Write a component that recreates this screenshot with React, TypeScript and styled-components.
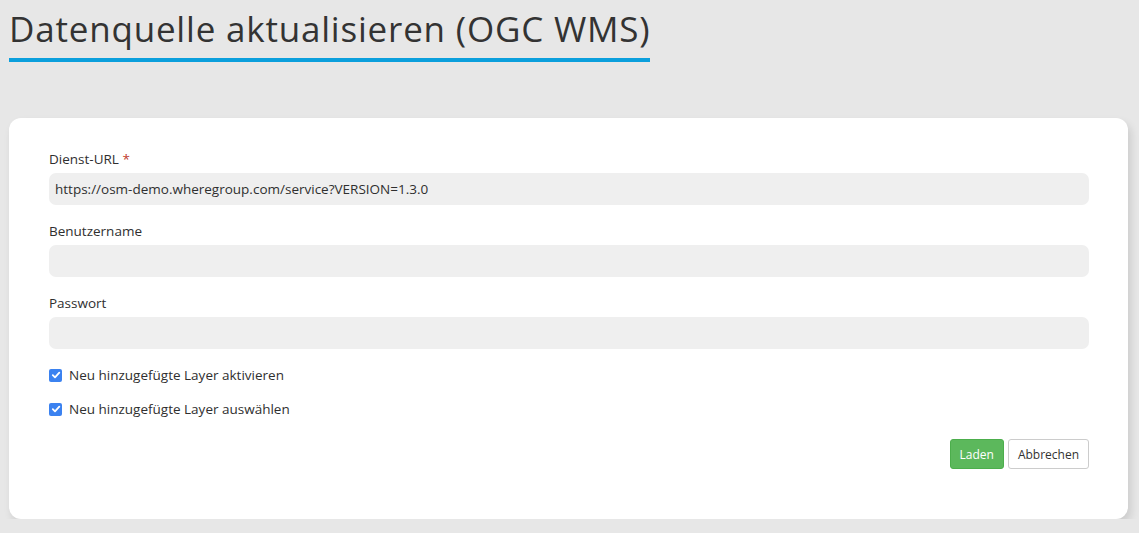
import React from "react";
import styled, { createGlobalStyle } from "styled-components";

const Global = createGlobalStyle`
  html, body { margin: 0; padding: 0; background: #e7e7e7; }
  body { font-family: "Open Sans", "Noto Sans", sans-serif; color: #333; }
  * { box-sizing: border-box; }
`;

const Page = styled.div`
  padding: 0 11px 0 9px;
  display: flex;
  flex-direction: column;
  align-items: flex-start;
`;

const Title = styled.h1`
  margin: 0;
  padding-top: 6px;
  font-weight: 400;
  font-size: 35px;
  line-height: 46px;
  color: #333;
  border-bottom: 4px solid #0b9fdc;
  padding-bottom: 6px;
  letter-spacing: 0.8px;
`;

const Card = styled.div`
  margin-top: 56px;
  align-self: stretch;
  background: #fff;
  border-radius: 12px;
  box-shadow: 3px 5px 8px rgba(0, 0, 0, 0.12);
  padding: 32px 39px 50px 40px;
  display: flex;
  flex-direction: column;
`;

const Field = styled.div`
  display: flex;
  flex-direction: column;
  margin-bottom: 17px;
`;

const Label = styled.label`
  font-size: 13.5px;
  line-height: 18px;
  margin-bottom: 5px;
  color: #2f2f2f;
`;

const Required = styled.span`
  color: #c0392b;
`;

const Input = styled.div`
  height: 32px;
  border-radius: 7px;
  background: #efefef;
  font-size: 13.5px;
  line-height: 32px;
  padding: 0 6px;
  color: #2f2f2f;
`;

const CheckRow = styled.label<{ $first?: boolean }>`
  display: flex;
  align-items: center;
  gap: 7px;
  font-size: 13.5px;
  line-height: 18px;
  color: #2f2f2f;
  margin-top: ${(p) => (p.$first ? "0px" : "16px")};
`;

const Box = styled.span`
  width: 13px;
  height: 13px;
  border-radius: 2px;
  background: #3b82f0;
  display: inline-flex;
  align-items: center;
  justify-content: center;
`;

const Actions = styled.div`
  display: flex;
  justify-content: flex-end;
  gap: 4px;
  margin-top: 21px;
`;

const Button = styled.button<{ $primary?: boolean }>`
  height: 30px;
  padding: 0 9px;
  font-family: inherit;
  font-size: 12px;
  border-radius: 3px;
  border: 1px solid ${(p) => (p.$primary ? "#4cae4c" : "#cccccc")};
  background: ${(p) => (p.$primary ? "#5cb85c" : "#fff")};
  color: ${(p) => (p.$primary ? "#fff" : "#333")};
`;

const Check = () => (
  <Box>
    <svg width="10" height="10" viewBox="0 0 10 10">
      <path d="M1.8 5.2 L4 7.3 L8.3 2.6" stroke="#fff" strokeWidth="1.8" fill="none" strokeLinecap="round" strokeLinejoin="round" />
    </svg>
  </Box>
);

export default function App() {
  return (
    <>
      <Global />
      <Page>
        <Title>Datenquelle aktualisieren (OGC WMS)</Title>
        <Card>
          <Field>
            <Label>
              Dienst-URL <Required>*</Required>
            </Label>
            <Input>https://osm-demo.wheregroup.com/service?VERSION=1.3.0</Input>
          </Field>
          <Field>
            <Label>Benutzername</Label>
            <Input />
          </Field>
          <Field>
            <Label>Passwort</Label>
            <Input />
          </Field>
          <CheckRow $first>
            <Check />
            Neu hinzugefügte Layer aktivieren
          </CheckRow>
          <CheckRow>
            <Check />
            Neu hinzugefügte Layer auswählen
          </CheckRow>
          <Actions>
            <Button $primary>Laden</Button>
            <Button>Abbrechen</Button>
          </Actions>
        </Card>
      </Page>
    </>
  );
}
